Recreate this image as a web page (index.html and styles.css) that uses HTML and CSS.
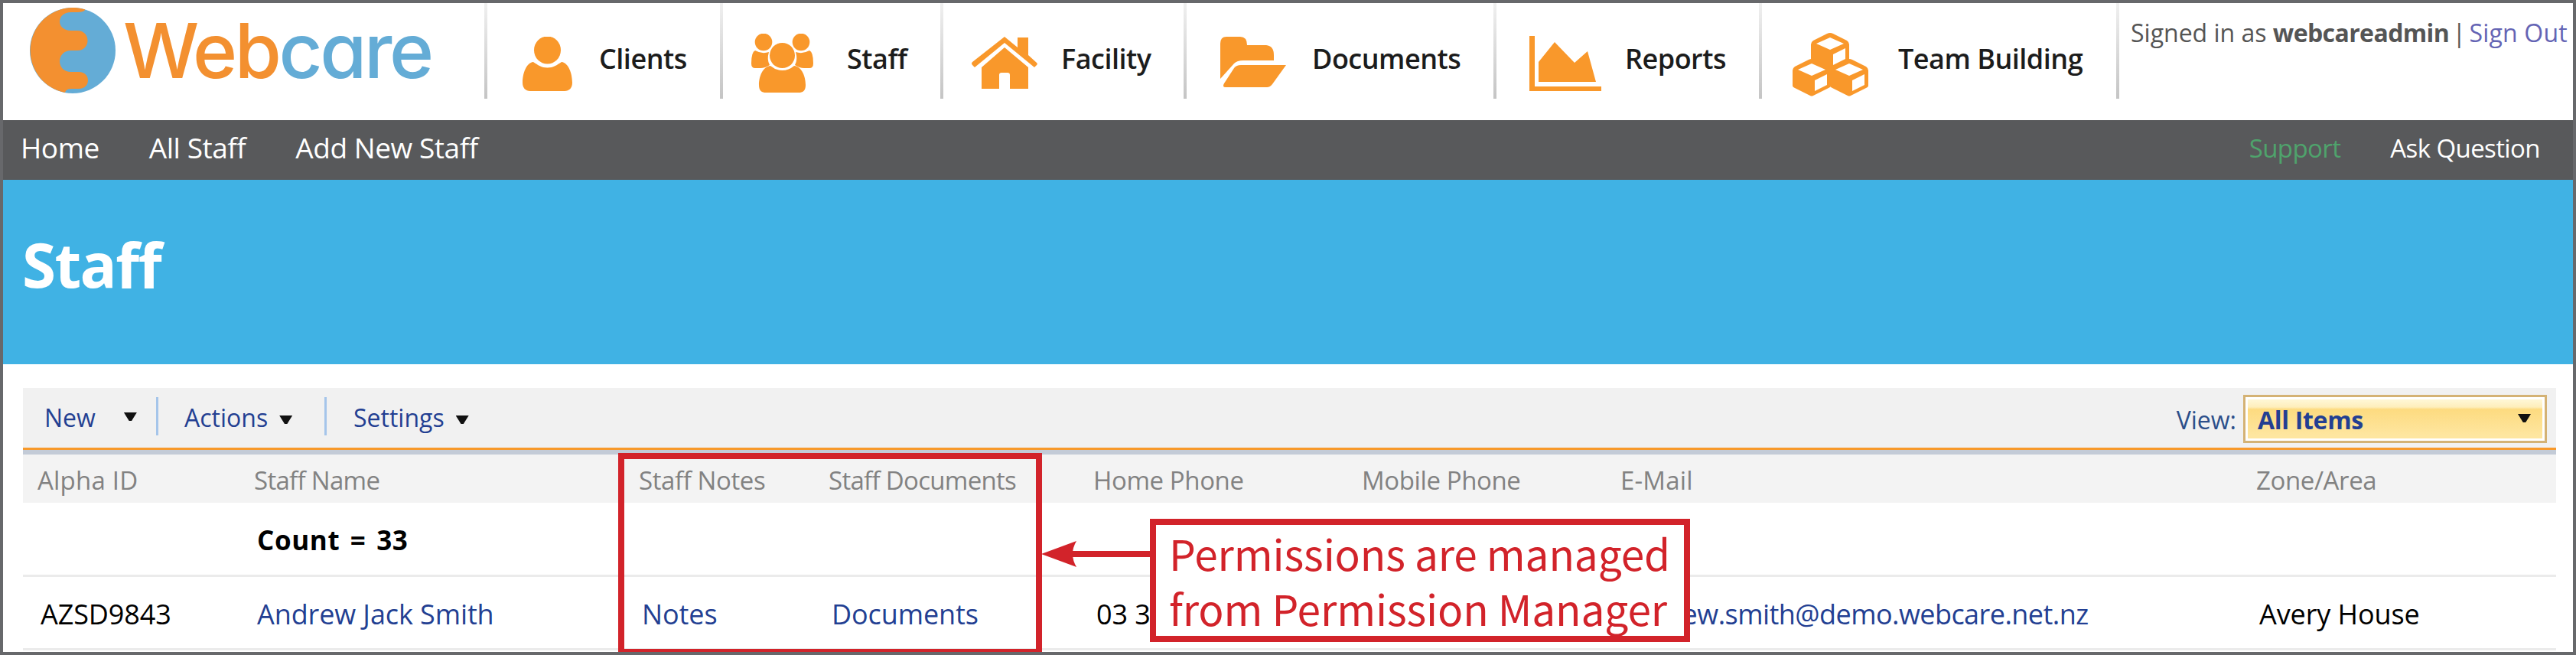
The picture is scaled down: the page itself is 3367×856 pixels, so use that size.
FILE: index.html
```html
<!DOCTYPE html>
<html lang="en">
<head>
    <meta charset="UTF-8">
    <meta name="viewport" content="width=device-width, initial-scale=1.0">
    <title>Staff</title>
    <link rel="stylesheet" href="styles.css">
</head>
<body>
<div class="page">
    <!-- Header -->
    <header class="header">
        <a class="logo" href="#">
            <svg class="logo-mark" viewBox="0 0 112 112">
                <circle cx="56" cy="56" r="56" fill="#64acd6"/>
                <path d="M72 2.300C66 .5 60 0 56 0A56 56 0 0 0 46 111C47 107 50 106 56 106H64C80 106 80 84 64 84H54C34 84 34 56 54 56H62C80 56 80 30 62 30H54C34 30 34 6 54 6H60C68 6 72 5 72 2.300Z" fill="#f39030"/>
            </svg>
            <span class="logo-text"><span class="logo-web">Web</span>care</span>
        </a>
        <nav class="main-nav">
            <a class="nav-item clients" href="#">
                <svg class="icon" viewBox="0 0 65 71">
                    <ellipse cx="32.500" cy="17.500" rx="17.500" ry="18"/>
                    <path d="M14 33C20 37 25 40.500 32.500 40.500S45 37 51 33C60 34 65 48 65 60C65 67 61 71 55 71H10C4 71 0 67 0 60C0 48 5 34 14 33Z"/>
                </svg>
                <span>Clients</span>
            </a>
            <a class="nav-item staff" href="#">
                <svg class="icon" viewBox="0 0 81 78">
                    <circle cx="16" cy="11" r="11.300"/>
                    <circle cx="65" cy="11" r="11.300"/>
                    <circle cx="40.500" cy="28.500" r="16.500"/>
                    <path d="M5 22Q14 27 23 24Q20 34 24 41Q18 45 12 45H5Q0 45 0 39Q0 24 5 22Z"/>
                    <path d="M76 22Q67 27 58 24Q61 34 57 41Q63 45 69 45H76Q81 45 81 39Q81 24 76 22Z"/>
                    <path d="M25 42Q32 48 40.500 48T56 42C66 43 71 56 71 67C71 75 67 77 62 77H19C14 77 10 75 10 67C10 56 15 43 25 42Z"/>
                </svg>
                <span>Staff</span>
            </a>
            <a class="nav-item facility" href="#">
                <svg class="icon" viewBox="0 0 86 69">
                    <path d="M43 0L60 14V1H74V24L85 34Q87 36 84 38L82 40L43 8L4 40L1 37Q-1 35 1 33Z"/>
                    <path d="M43 14L74 40V68H50V50Q50 47 47 47H39Q36 47 36 50V68H13V40Z"/>
                </svg>
                <span>Facility</span>
            </a>
            <a class="nav-item documents" href="#">
                <svg class="icon" viewBox="0 0 86 66">
                    <path d="M0 55V9Q0 0 8 0H26Q35 0 35 11H60Q70 12 70 24V31H30Q22 31 18 35Z"/>
                    <path d="M27 37H86L68 62Q65 66 61 66H7Q2 66 5 61L18 41Q21 37 27 37Z"/>
                </svg>
                <span>Documents</span>
            </a>
            <a class="nav-item reports" href="#">
                <svg class="icon" viewBox="0 0 94 72">
                    <path d="M0 0H7V66H94V72H0Z"/>
                    <path d="M12 60V34L33 8L59 35L76 20L87 60Z"/>
                </svg>
                <span>Reports</span>
            </a>
            <a class="nav-item team" href="#">
                <svg class="icon" viewBox="0 0 99 83">
                    <defs>
                        <g id="cube">
                            <path d="M21 1Q25 -1 29 1L47 10Q50 12 50 15V35Q50 37 47 38L27 48Q25 49 23 48L3 38Q0 37 0 35V15Q0 12 3 10Z"/>
                            <path class="face" d="M25 6L43 14L25 22L7 14ZM29 28L45 20V34L29 42Z"/>
                        </g>
                    </defs>
                    <use href="#cube" x="24" y="0"/>
                    <use href="#cube" x="0" y="34"/>
                    <use href="#cube" x="49" y="34"/>
                </svg>
                <span>Team Building</span>
            </a>
        </nav>
        <div class="account">
            Signed in as <b>webcareadmin</b> <span class="bar">|</span> <a href="#">Sign Out</a>
        </div>
    </header>

    <!-- Secondary navigation -->
    <nav class="sub-nav">
        <a href="#">Home</a>
        <a href="#">All Staff</a>
        <a href="#">Add New Staff</a>
        <a class="support" href="#">Support</a>
        <a class="ask" href="#">Ask Question</a>
    </nav>

    <div class="banner">
        <h1>Staff</h1>
    </div>

    <main class="content">
        <!-- List toolbar -->
        <div class="toolbar">
            <a class="tool new" href="#">New<i class="caret"></i></a>
            <a class="tool actions" href="#">Actions<i class="caret"></i></a>
            <a class="tool settings" href="#">Settings<i class="caret"></i></a>
            <span class="view-label">View:</span>
            <div class="view-select">All Items<i class="caret"></i></div>
        </div>

        <!-- Staff list -->
        <div class="row head">
            <span class="wide">Alpha ID</span>
            <span class="tight">Staff Name</span>
            <span>Staff Notes</span>
            <span class="tight">Staff Documents</span>
            <span>Home Phone</span>
            <span>Mobile Phone</span>
            <span class="wide">E-Mail</span>
            <span>Zone/Area</span>
        </div>
        <div class="row count">
            <span></span>
            <b>Count = 33</b>
        </div>
        <div class="row">
            <span>AZSD9843</span>
            <a href="#">Andrew Jack Smith</a>
            <a href="#">Notes</a>
            <a href="#">Documents</a>
            <span>03 3</span>
            <span></span>
            <a class="email" href="#">andrew.smith@demo.webcare.net.nz</a>
            <span>Avery House</span>
        </div>
    </main>

    <!-- Callout over the list -->
    <div class="highlight"></div>
    <svg class="arrow" viewBox="0 0 142 34">
        <path d="M0 17L46 0Q36 17 46 34Z"/>
        <path d="M38 13H142V21H38Z"/>
    </svg>
    <div class="callout">Permissions are managed<br>from Permission Manager</div>
</div>
</body>
</html>
```
FILE: styles.css
```css
* {
    box-sizing: border-box;
}

body {
    margin: 0;
    font-family: "Open Sans", "Noto Sans", sans-serif;
    background: #fff;
}

a {
    text-decoration: none;
    color: #233f92;
}

.page {
    position: relative;
    width: 3367px;
    height: 856px;
    border: 4px solid #67686b;
    overflow: hidden;
    white-space: nowrap;
}

/* Header */
.header {
    display: flex;
    height: 153px;
}

.logo {
    display: flex;
    flex: none;
    width: 629px;
    padding: 6px 0 0 35px;
}

.logo-mark {
    width: 112px;
    height: 112px;
}

.logo-text {
    margin-left: 10px;
    color: #64acd6;
    font-family: Inter, "Liberation Sans", sans-serif;
    font-size: 99px;
    font-weight: 500;
    line-height: 112px;
    letter-spacing: -3.4px;
    font-feature-settings: "cv11"; /* single-storey a */
}

.logo-web {
    color: #f39030;
}

.main-nav {
    display: flex;
    flex: none;
    height: 125px;
}

.nav-item {
    display: flex;
    border-left: 4px solid;
    border-image: linear-gradient(#f0f0f0, #c4c4c4) 1;
    color: #1c1c1c;
    font-size: 36px;
    font-weight: 600;
    line-height: 146px;
    letter-spacing: -0.5px;
}

.icon {
    flex: none;
    fill: #f9982b;
}

.face {
    fill: #fff;
}

.clients { width: 308px; }
.clients .icon { width: 65px; height: 71px; margin: 44px 35px 0 46px; }
.staff { width: 288px; }
.staff .icon { width: 81px; height: 78px; margin: 40px 44px 0 37px; }
.facility { width: 318px; }
.facility .icon { width: 86px; height: 69px; margin: 44px 31px 0 37px; }
.documents { width: 405px; }
.documents .icon { width: 86px; height: 66px; margin: 44px 34px 0 44px; }
.reports { width: 347px; }
.reports .icon { width: 94px; height: 72px; margin: 43px 31px 0 43px; }
.team { width: 471px; border-right: 4px solid; }
.team .icon { width: 99px; height: 83px; margin: 39px 39px 0 40px; }

.account {
    margin-left: 15px;
    padding-top: 17px;
    color: #555;
    font-size: 32px;
    line-height: 44px;
}

.account b {
    letter-spacing: -0.6px;
}

.account a {
    color: #6464b4;
    letter-spacing: 0.2px;
}

.bar {
    margin: 0 -4px;
}

/* Secondary navigation */
.sub-nav {
    display: flex;
    height: 78px;
    padding-left: 23px;
    background: #58595b;
    font-size: 37px;
    line-height: 71px;
    letter-spacing: -0.45px;
}

.sub-nav a {
    color: #fff;
    margin-right: 65px;
}

.sub-nav .support {
    margin-left: auto;
    color: #4fa36c;
    font-size: 33px;
    line-height: 74px;
    letter-spacing: -0.6px;
}

.sub-nav .ask {
    margin-right: 43px;
    font-size: 33px;
    line-height: 74px;
    letter-spacing: -0.6px;
}

.banner {
    height: 241px;
    padding: 51px 0 0 25px;
    background: #40b2e4;
}

.banner h1 {
    margin: 0;
    color: #fff;
    font-size: 80px;
    line-height: 118px;
    letter-spacing: -1.6px;
}

/* Toolbar */
.content {
    width: 3311px;
    margin: 31px 0 0 26px;
}

.toolbar {
    display: flex;
    height: 87px;
    background: #f1f1f1;
    border-bottom: 6px solid #c3cbd7;
    box-shadow: inset 0 -3px #f7992b;
    font-size: 32px;
    line-height: 78px;
}

.tool {
    display: flex;
}

.caret {
    width: 17px;
    height: 11px;
    background: #111;
    clip-path: polygon(0 0, 100% 0, 60% 100%, 40% 100%);
}

.new { width: 174px; padding-left: 28px; }
.new .caret { margin: 32px 0 0 37px; }
.actions, .settings {
    margin-top: 12px;
    height: 50px;
    border-left: 3px solid #a5c5ea;
    line-height: 54px;
}
.actions { width: 220px; padding-left: 34px; }
.settings { padding-left: 35px; }
.actions .caret, .settings .caret { margin: 24px 0 0 15px; }

.view-label {
    margin-left: auto;
    color: #2c4f8a;
    line-height: 84px;
}

.view-select {
    display: flex;
    justify-content: space-between;
    width: 397px;
    height: 63px;
    margin: 9px 12px 0 9px;
    padding: 0 18px 0 16px;
    border: 3px solid #d4b274;
    box-shadow: inset 0 0 0 3px #fff;
    background: linear-gradient(#fff6d2 5px, #feeebb 13px, #fddb80 16px, #fee6a0 50px);
    color: #233f92;
    font-weight: bold;
    line-height: 60px;
    letter-spacing: -0.3px;
}

.view-select .caret {
    margin-top: 22px;
}

/* List */
.row {
    display: grid;
    grid-template-columns: 283px 503px 248px 346px 351px 338px 831px 411px;
    height: 96px;
    padding-left: 23px;
    border-bottom: 3px solid #ebebeb;
    color: #000;
    font-size: 36px;
    line-height: 97px;
    letter-spacing: -0.1px;
}

.row .email {
    letter-spacing: -0.55px;
}

.row.head {
    height: 63px;
    padding-left: 19px;
    border: 0;
    background: #f3f3f3;
    color: #828282;
    font-size: 33px;
    line-height: 67px;
    letter-spacing: -0.4px;
}

.row .tight {
    letter-spacing: -0.7px;
}

.row .wide {
    letter-spacing: 0.2px;
}

.row.count {
    height: 97px;
    font-size: 35px;
    line-height: 97px;
    letter-spacing: 0.6px;
    word-spacing: 4px;
}

/* Callout */
.highlight {
    position: absolute;
    left: 804px;
    top: 588px;
    width: 554px;
    height: 264px;
    border: 8px solid #d2232a;
}

.arrow {
    position: absolute;
    left: 1357px;
    top: 703px;
    width: 142px;
    height: 34px;
    fill: #d2232a;
}

.callout {
    position: absolute;
    left: 1499px;
    top: 674px;
    width: 706px;
    height: 161px;
    padding-left: 17px;
    border: 8px solid #d2232a;
    background: #fff;
    color: #d2232a;
    font-family: "Noto Sans CJK SC", sans-serif;
    font-size: 55px;
    line-height: 72px;
    letter-spacing: -0.15px;
}
```
